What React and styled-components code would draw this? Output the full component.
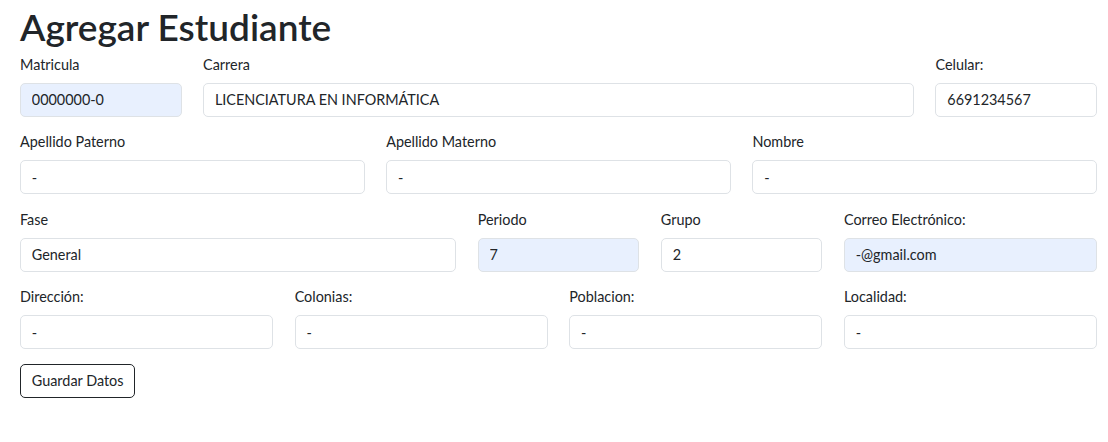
import React from 'react';
import styled, { createGlobalStyle } from 'styled-components';

const GlobalStyle = createGlobalStyle`
  * { box-sizing: border-box; }
  body {
    margin: 0;
    background: #ffffff;
    color: #212529;
    font-family: "Segoe UI", Lato, "Noto Sans", sans-serif;
    font-size: 14.4px;
    line-height: 1.5;
  }
`;

const Page = styled.div`
  padding: 0 11px 0 20px;
`;

const Title = styled.h1`
  margin: 0 0 5.5px;
  padding-top: 6px;
  font-size: 37px;
  font-weight: 600;
  line-height: 1.15;
`;

const Row = styled.div`
  display: grid;
  grid-template-columns: repeat(12, 1fr);
  column-gap: 21.6px;
`;

const Field = styled.div`
  grid-column: span ${(p) => p.span};
  margin-bottom: 14.4px;
`;

const Label = styled.label`
  display: block;
  margin-bottom: 7.2px;
  font-size: 14.4px;
`;

const Input = styled.input`
  display: block;
  width: 100%;
  height: 34.2px;
  padding: 5.4px 10.8px;
  font-family: inherit;
  font-size: 14.4px;
  color: #212529;
  background: ${(p) => (p.$filled ? '#e8f0fe' : '#ffffff')};
  border: 1px solid #dee2e6;
  border-radius: 5px;
  outline: none;
`;

const Button = styled.button`
  height: 34.2px;
  padding: 0 10.8px;
  font-family: inherit;
  font-size: 14.4px;
  color: #212529;
  background: #ffffff;
  border: 1px solid #212529;
  border-radius: 5px;
`;

const rows = [
  [
    { label: 'Matricula', value: '0000000-0', span: 2, filled: true },
    { label: 'Carrera', value: 'LICENCIATURA EN INFORMÁTICA', span: 8 },
    { label: 'Celular:', value: '6691234567', span: 2 },
  ],
  [
    { label: 'Apellido Paterno', value: '-', span: 4 },
    { label: 'Apellido Materno', value: '-', span: 4 },
    { label: 'Nombre', value: '-', span: 4 },
  ],
  [
    { label: 'Fase', value: 'General', span: 5 },
    { label: 'Periodo', value: '7', span: 2, filled: true },
    { label: 'Grupo', value: '2', span: 2 },
    { label: 'Correo Electrónico:', value: '-@gmail.com', span: 3, filled: true },
  ],
  [
    { label: 'Dirección:', value: '-', span: 3 },
    { label: 'Colonias:', value: '-', span: 3 },
    { label: 'Poblacion:', value: '-', span: 3 },
    { label: 'Localidad:', value: '-', span: 3 },
  ],
];

export default function App() {
  return (
    <Page>
      <GlobalStyle />
      <Title>Agregar Estudiante</Title>
      {rows.map((row, i) => (
        <Row key={i}>
          {row.map((f) => (
            <Field key={f.label} span={f.span}>
              <Label>{f.label}</Label>
              <Input $filled={f.filled} defaultValue={f.value} />
            </Field>
          ))}
        </Row>
      ))}
      <Button>Guardar Datos</Button>
    </Page>
  );
}
